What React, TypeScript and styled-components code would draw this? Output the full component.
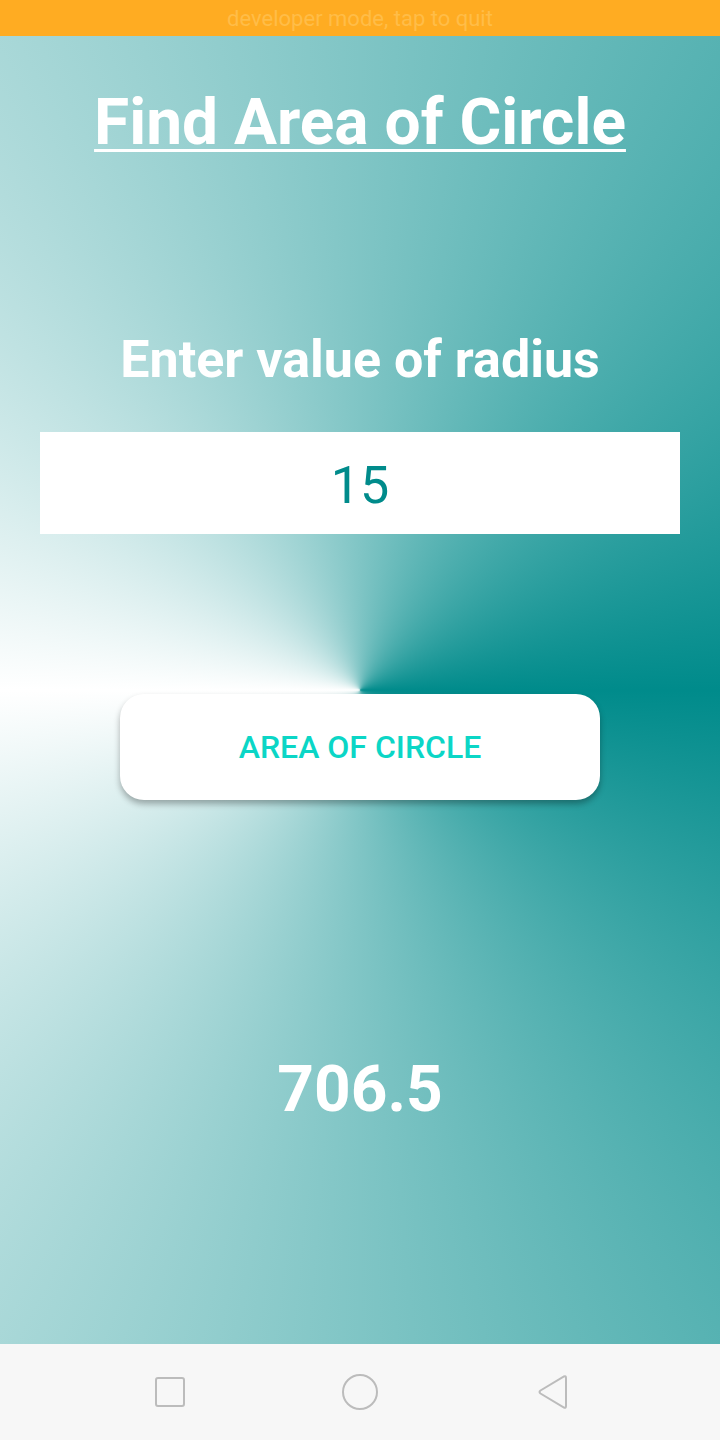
import React, { useState } from "react";
import styled, { createGlobalStyle } from "styled-components";

const GlobalStyle = createGlobalStyle`
  html, body { margin: 0; padding: 0; }
  body { font-family: Roboto, "Noto Sans", sans-serif; }
  * { box-sizing: border-box; }
`;

const Screen = styled.div`
  width: 720px;
  height: 1440px;
  display: flex;
  flex-direction: column;
  overflow: hidden;
`;

const StatusBar = styled.div`
  height: 36px;
  background: #ffac22;
  display: flex;
  align-items: center;
  justify-content: center;
  color: #ffbd48;
  font-size: 22px;
  font-family: Roboto, sans-serif;
`;

const Main = styled.main`
  flex: 1;
  display: flex;
  flex-direction: column;
  align-items: center;
  background: conic-gradient(from 90deg at 50% 50%, #008b8b 0deg, #ffffff 180deg, #008b8b 360deg);
  padding-top: 55px;
`;

const Title = styled.h1`
  margin: 0;
  font-size: 64px;
  line-height: 1;
  font-weight: 700;
  color: #ffffff;
  text-decoration: underline;
  text-decoration-thickness: 3px;
  text-underline-offset: 5px;
`;

const Label = styled.div`
  margin-top: 179px;
  font-size: 52px;
  line-height: 1;
  font-weight: 700;
  color: #ffffff;
`;

const Input = styled.input`
  margin-top: 46px;
  width: 640px;
  height: 102px;
  border: none;
  outline: none;
  background: #ffffff;
  text-align: center;
  font-family: Roboto, sans-serif;
  font-size: 52px;
  color: #008b8b;
  padding: 4px 0 0;
`;

const Button = styled.button`
  margin-top: 160px;
  width: 480px;
  height: 106px;
  border: none;
  border-radius: 24px;
  background: #ffffff;
  box-shadow: 0 4px 6px rgba(0, 0, 0, 0.3);
  font-family: Roboto, sans-serif;
  font-weight: 500;
  font-size: 32px;
  color: #0bd6c6;
  text-transform: uppercase;
  cursor: pointer;
`;

const Result = styled.div`
  margin-top: 258px;
  font-size: 64px;
  line-height: 1;
  font-weight: 700;
  color: #ffffff;
`;

const NavBar = styled.nav`
  height: 96px;
  background: #f7f7f7;
  display: flex;
  align-items: center;
  justify-content: space-between;
  padding: 0 152px;
`;

const NavIcon = styled.svg`
  width: 36px;
  height: 36px;
  fill: none;
  stroke: #bcbcbc;
  stroke-width: 2;
`;

export default function App() {
  const [radius, setRadius] = useState("15");
  const [area, setArea] = useState("706.5");
  return (
    <Screen>
      <GlobalStyle />
      <StatusBar>developer mode, tap to quit</StatusBar>
      <Main>
        <Title>Find Area of Circle</Title>
        <Label>Enter value of radius</Label>
        <Input value={radius} onChange={(e) => setRadius(e.target.value)} />
        <Button onClick={() => setArea(String(3.14 * Number(radius) * Number(radius)))}>
          Area of Circle
        </Button>
        <Result>{area}</Result>
      </Main>
      <NavBar>
        <NavIcon viewBox="0 0 36 36">
          <rect x="4" y="4" width="28" height="28" rx="2" />
        </NavIcon>
        <NavIcon viewBox="0 0 36 36">
          <ellipse cx="18" cy="18" rx="17" ry="17" />
        </NavIcon>
        <NavIcon viewBox="0 0 36 36">
          <path d="M32 2.5 Q34 1.5 34 4 L34 32 Q34 34.5 32 33.5 L8.5 19.5 Q6.5 18 8.5 16.5 Z" />
        </NavIcon>
      </NavBar>
    </Screen>
  );
}
